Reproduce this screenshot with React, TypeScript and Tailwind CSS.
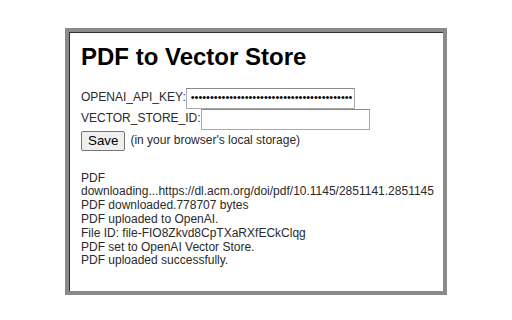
import React from "react";

export default function App() {
  const dots = "•".repeat(42);
  return (
    <div className="w-[512px] h-[320px] bg-white overflow-hidden pt-[28px] pl-[65px]" style={{ fontFamily: '"Liberation Sans", Arial, sans-serif' }}>
      <div className="w-[382px] h-[267px] border-[4px] border-[#8a8a8a] bg-white">
        <div className="h-full border-l border-t border-[#303030] border-r-[#a8a8a8] border-b-[#a8a8a8] pl-[11px] pt-[10px] text-[12px] leading-[13.8px] text-[#2a2a2a]">
          <h1 className="text-[24px] leading-[27.6px] font-bold text-black">PDF to Vector Store</h1>
          <div className="mt-[17px] flex items-center h-[21px]">
            <span>OPENAI_API_KEY:</span>
            <div className="w-[169px] h-[21px] border border-[#a9a9a9] border-t-[#8a8a8a] bg-white flex items-center pl-[4px] overflow-hidden whitespace-nowrap text-[11px] text-black">
              {dots}
            </div>
          </div>
          <div className="flex items-center h-[21px]">
            <span>VECTOR_STORE_ID:</span>
            <div className="w-[169px] h-[21px] border border-[#a9a9a9] border-t-[#8a8a8a] bg-white" />
          </div>
          <div className="mt-[1px] flex items-center h-[20px]">
            <button className="h-[20px] px-[6px] bg-[#efefef] border border-[#767676] rounded-[2px] text-[13.33px] leading-[16px] text-black">Save</button>
            <span className="ml-[5px]">(in your browser's local storage)</span>
          </div>
          <div className="mt-[21px]">
            PDF
            <br />
            downloading...https://dl.acm.org/doi/pdf/10.1145/2851141.2851145
            <br />
            PDF downloaded.778707 bytes
            <br />
            PDF uploaded to OpenAI.
            <br />
            File ID: file-FIO8Zkvd8CpTXaRXfECkClqg
            <br />
            PDF set to OpenAI Vector Store.
            <br />
            PDF uploaded successfully.
          </div>
        </div>
      </div>
    </div>
  );
}
